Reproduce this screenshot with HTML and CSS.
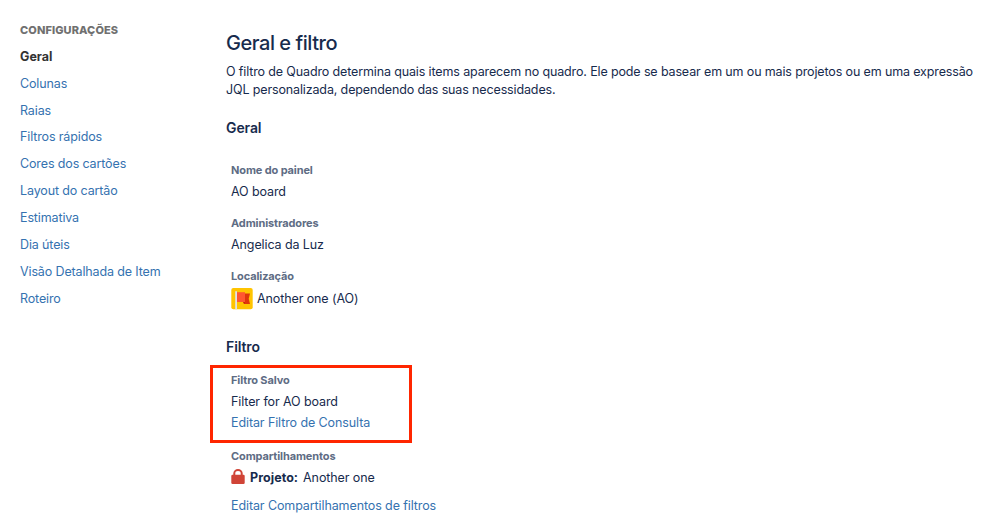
FILE: index.html
```html
<!DOCTYPE html>
<html lang="pt-BR">
  <head>
    <meta charset="UTF-8" />
    <meta name="viewport" content="width=device-width, initial-scale=1.0" />
    <title>Geral e filtro</title>
    <link rel="stylesheet" href="styles.css">
  </head>
  <body>
    <nav class="sidebar">
      <h4>CONFIGURAÇÕES</h4>
      <ul>
        <li class="active">Geral</li>
        <li><a href="#">Colunas</a></li>
        <li><a href="#">Raias</a></li>
        <li><a href="#">Filtros rápidos</a></li>
        <li><a href="#">Cores dos cartões</a></li>
        <li><a href="#">Layout do cartão</a></li>
        <li><a href="#">Estimativa</a></li>
        <li><a href="#">Dia úteis</a></li>
        <li><a href="#">Visão Detalhada de Item</a></li>
        <li><a href="#">Roteiro</a></li>
      </ul>
    </nav>

    <main class="content">
      <h1>Geral e filtro</h1>
      <p class="description">
        O filtro de Quadro determina quais items aparecem no quadro. Ele pode se basear em um ou mais projetos ou em uma expressão JQL personalizada, dependendo das suas necessidades.
      </p>

      <h2>Geral</h2>
      <dl class="fields">
        <dt>Nome do painel</dt>
        <dd>AO board</dd>
        <dt>Administradores</dt>
        <dd>Angelica da Luz</dd>
        <dt>Localização</dt>
        <dd class="location">
          <svg class="avatar" viewBox="0 0 22 22">
            <rect x="0.300" width="21.400" height="21.200" rx="2" fill="#ffc400" />
            <path d="M12 5.500h7l-1.300 5.200 1.300 5.300h-6z" fill="#de350b" />
            <path d="M6 4.200h8V14H6z" fill="#ff5630" />
            <path d="M13 16l-1-2h2z" fill="#bf2600" />
            <path d="M4.200 3.300H6v17.900H4.200z" fill="#dfe1e6" />
          </svg>
          <span>Another one (AO)</span>
        </dd>
      </dl>

      <h2 class="filter-title">Filtro</h2>
      <dl class="saved-filter">
        <dt>Filtro Salvo</dt>
        <dd>Filter for AO board</dd>
        <dd><a href="#">Editar Filtro de Consulta</a></dd>
      </dl>
      <dl class="shares">
        <dt>Compartilhamentos</dt>
        <dd class="project">
          <svg class="lock" viewBox="0 0 14 16">
            <path d="M3.300 7V4.300a3.700 3.300 0 0 1 7.400 0V7" fill="none" stroke="#d04437" stroke-width="2" />
            <rect x="0.300" y="5.800" width="13.400" height="9.200" rx="1.200" fill="#d04437" />
          </svg>
          <strong>Projeto:</strong>
          <span>Another one</span>
        </dd>
        <dd class="edit-shares"><a href="#">Editar Compartilhamentos de filtros</a></dd>
      </dl>
    </main>
  </body>
</html>
```
FILE: styles.css
```css
* {
  box-sizing: border-box;
}
body {
  margin: 0;
  display: flex;
  height: 526px;
  overflow: hidden;
  background: #fff;
  color: #172b4d;
  font-family: Inter, sans-serif;
  font-size: 12.5px;
  line-height: 18px;
  letter-spacing: -0.1px;
}
h1,
h2,
h4,
p,
ul,
dl,
dd {
  margin: 0;
  padding: 0;
}
a {
  color: #3572b0;
  text-decoration: none;
}
.sidebar {
  width: 210px;
  padding: 21px 0 0 20px;
}
.sidebar h4 {
  color: #707070;
  font-size: 11px;
  font-weight: 800;
  line-height: 18px;
  letter-spacing: 0.1px;
}
.sidebar ul {
  list-style: none;
  padding-top: 3.8px;
  letter-spacing: -0.13px;
}
.sidebar li {
  height: 26.9px;
  line-height: 27px;
}
.sidebar .active {
  color: #333;
  font-weight: 700;
  letter-spacing: 0;
}
.content {
  width: 772px;
  padding: 30px 0 0 16px;
}
h1 {
  font-size: 20px;
  font-weight: 500;
  line-height: 26px;
  letter-spacing: -0.45px;
}
.description {
  width: 756px;
  padding-top: 7px;
  letter-spacing: -0.135px;
}
h2 {
  margin-top: 20px;
  font-size: 14px;
  font-weight: 600;
  line-height: 18px;
}
dt {
  color: #5e6c84;
  font-size: 11px;
  font-weight: 700;
  line-height: 18px;
  letter-spacing: -0.12px;
}
dd {
  line-height: 21px;
}
.fields {
  padding: 24px 0 0 5px;
}
.fields dd {
  height: 35px;
  padding-top: 2px;
}
.fields .location {
  display: flex;
  align-items: center;
  gap: 4px;
  height: 22px;
  margin-top: 3px;
  padding: 0;
}
.location span {
  padding-bottom: 1px;
}
.avatar {
  width: 22px;
  height: 22px;
}
.filter-title {
  margin-top: 28px;
}
.saved-filter {
  width: 202px;
  height: 78px;
  margin: 9px 0 0 -16px;
  padding: 3px 0 0 18px;
  border: 3px solid #ff2600;
}
.saved-filter dt {
  height: 20px;
}
.shares {
  padding: 4px 0 0 5px;
}
.project {
  display: flex;
  align-items: center;
  gap: 5px;
  padding-top: 2px;
}
.project strong {
  letter-spacing: 0.05px;
}
.lock {
  width: 14px;
  height: 16px;
  margin-bottom: 1px;
}
.edit-shares {
  padding-top: 7px;
}
```
